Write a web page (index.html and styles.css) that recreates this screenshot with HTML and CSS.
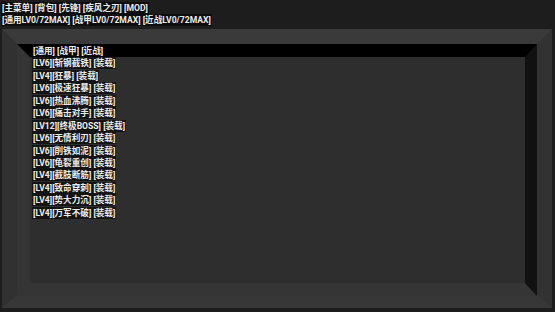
FILE: index.html
```html
<!DOCTYPE html>
<html lang="zh-CN">
<head>
    <meta charset="UTF-8">
    <title>MOD Menu</title>
    <link rel="stylesheet" href="styles.css">
</head>
<body>
    <div class="topbar">
        <div class="line"><span class="tag">[主菜单] [背包] [先锋] [疾风之刃] [MOD]</span></div>
        <div class="line"><span class="tag">[通用LV0/72MAX] [战甲LV0/72MAX] [近战LV0/72MAX]</span></div>
    </div>

    <div class="frame">
        <div class="panel">
            <ul class="list">
                <li><span class="tag">[通用] [战甲] [近战]</span></li>
                <li><span class="tag">[LV6][斩钢截铁] [装载]</span></li>
                <li><span class="tag">[LV4][狂暴] [装载]</span></li>
                <li><span class="tag">[LV6][极速狂暴] [装载]</span></li>
                <li><span class="tag">[LV6][热血沸腾] [装载]</span></li>
                <li><span class="tag">[LV6][痛击对手] [装载]</span></li>
                <li><span class="tag">[LV12][终极BOSS] [装载]</span></li>
                <li><span class="tag">[LV6][无情利刃] [装载]</span></li>
                <li><span class="tag">[LV6][削铁如泥] [装载]</span></li>
                <li><span class="tag">[LV6][龟裂重创] [装载]</span></li>
                <li><span class="tag">[LV4][截肢断筋] [装载]</span></li>
                <li><span class="tag">[LV4][致命穿刺] [装载]</span></li>
                <li><span class="tag">[LV4][势大力沉] [装载]</span></li>
                <li><span class="tag">[LV4][万军不破] [装载]</span></li>
            </ul>
        </div>
    </div>
</body>
</html>
```

FILE: styles.css
```css
body {
    margin: 0;
    background: #1d1d1d;
    font-family: Roboto, "Noto Sans CJK SC", sans-serif;
    font-size: 8.6px;
    font-weight: bold;
    color: #ececec;
    overflow: hidden;
}

.tag {
    background: rgba(0, 0, 0, 0.55);
    line-height: 11px;
    padding: 1px 1px;
}

/* top menu rows */
.topbar {
    padding: 2px 0 0 1px;
    height: 27px;
}

.topbar .line {
    height: 12px;
    line-height: 12px;
    white-space: nowrap;
}

/* outer bevel frame */
.frame {
    margin-left: 2px;
    width: 520px;
    height: 251px;
    border-style: solid;
    border-width: 15px 15px 13px 15px;
    border-color: #3a3a3a #323232 #373737 #313131;
}

/* inner bevel */
.panel {
    height: 226px;
    background: #2e2e2e;
    border-style: solid;
    border-width: 13px 12px 13px 13px;
    border-color: #000 #111 #353535 #353535;
}

.list {
    list-style: none;
    margin: -12px 0 0 0;
    padding: 0 0 0 2px;
}

.list li {
    height: 12.45px;
    line-height: 12.45px;
    white-space: nowrap;
}
```
